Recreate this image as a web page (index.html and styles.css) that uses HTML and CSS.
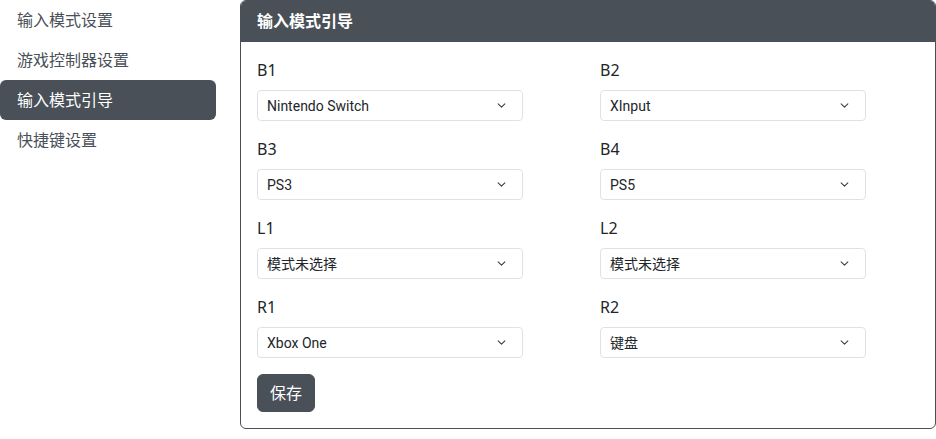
FILE: index.html
```html
<!DOCTYPE html>
<html lang="zh-CN">
<head>
    <meta charset="UTF-8">
    <meta name="viewport" content="width=device-width, initial-scale=1.0">
    <title>输入模式引导</title>
    <link rel="stylesheet" href="styles.css">
</head>
<body>
    <div class="layout">
        <!-- Sidebar navigation -->
        <nav class="sidebar">
            <a class="nav-link" href="#">输入模式设置</a>
            <a class="nav-link" href="#">游戏控制器设置</a>
            <a class="nav-link active" href="#">输入模式引导</a>
            <a class="nav-link" href="#">快捷键设置</a>
        </nav>

        <!-- Boot mode card -->
        <div class="card">
            <div class="card-header">输入模式引导</div>
            <div class="card-body">
                <div class="form-grid">
                    <div class="form-group">
                        <label class="form-label" for="b1">B1</label>
                        <select class="form-select" id="b1">
                            <option>Nintendo Switch</option>
                        </select>
                    </div>
                    <div class="form-group">
                        <label class="form-label" for="b2">B2</label>
                        <select class="form-select" id="b2">
                            <option>XInput</option>
                        </select>
                    </div>
                    <div class="form-group">
                        <label class="form-label" for="b3">B3</label>
                        <select class="form-select" id="b3">
                            <option>PS3</option>
                        </select>
                    </div>
                    <div class="form-group">
                        <label class="form-label" for="b4">B4</label>
                        <select class="form-select" id="b4">
                            <option>PS5</option>
                        </select>
                    </div>
                    <div class="form-group">
                        <label class="form-label" for="l1">L1</label>
                        <select class="form-select" id="l1">
                            <option>模式未选择</option>
                        </select>
                    </div>
                    <div class="form-group">
                        <label class="form-label" for="l2">L2</label>
                        <select class="form-select" id="l2">
                            <option>模式未选择</option>
                        </select>
                    </div>
                    <div class="form-group">
                        <label class="form-label" for="r1">R1</label>
                        <select class="form-select" id="r1">
                            <option>Xbox One</option>
                        </select>
                    </div>
                    <div class="form-group">
                        <label class="form-label" for="r2">R2</label>
                        <select class="form-select" id="r2">
                            <option>键盘</option>
                        </select>
                    </div>
                </div>
                <button class="btn" type="button">保存</button>
            </div>
        </div>
    </div>
</body>
</html>
```

FILE: styles.css
```css
body {
    margin: 0;
    font-family: "Segoe UI", "Noto Sans", "Noto Sans CJK SC", sans-serif;
    font-size: 16px;
    line-height: 24px;
    color: #212529;
    background-color: #fff;
}
.layout {
    display: flex;
    gap: 24px;
    width: 936px;
}
.sidebar {
    width: 216px;
    flex-shrink: 0;
    display: flex;
    flex-direction: column;
}
.nav-link {
    display: block;
    padding: 8px 17px;
    color: #495057;
    text-decoration: none;
    border-radius: 6px;
}
.nav-link.active {
    background-color: #495057;
    color: #fff;
}
.card {
    flex: 1;
    border: 1px solid #495057;
    border-radius: 6px;
    overflow: hidden;
}
.card-header {
    background-color: #495057;
    color: #fff;
    font-weight: bold;
    padding: 8px 16px;
    border-bottom: 1px solid #495057;
}
.card-body {
    padding: 16px;
}
.form-grid {
    display: grid;
    grid-template-columns: 319px 1fr;
    column-gap: 24px;
}
.form-group {
    margin-bottom: 16px;
}
.form-label {
    display: block;
    margin-bottom: 8px;
}
.form-select {
    display: block;
    width: 266px;
    height: 31px;
    padding: 4px 32px 4px 9px;
    font-family: "Segoe UI", Roboto, "Noto Sans CJK SC", sans-serif;
    font-size: 14px;
    color: #212529;
    background-color: #fff;
    background-image: url("data:image/svg+xml,%3csvg xmlns='http://www.w3.org/2000/svg' viewBox='0 0 16 16'%3e%3cpath fill='none' stroke='%23343a40' stroke-linecap='round' stroke-linejoin='round' stroke-width='1.8' d='m2 5 6 6 6-6'/%3e%3c/svg%3e");
    background-repeat: no-repeat;
    background-position: right 14px center;
    background-size: 13px 9px;
    border: 1px solid #dee2e6;
    border-radius: 4px;
    appearance: none;
}
.btn {
    display: block;
    padding: 6px 12px;
    font-family: inherit;
    font-size: 16px;
    line-height: 24px;
    color: #fff;
    background-color: #495057;
    border: 1px solid #495057;
    border-radius: 6px;
}
```
